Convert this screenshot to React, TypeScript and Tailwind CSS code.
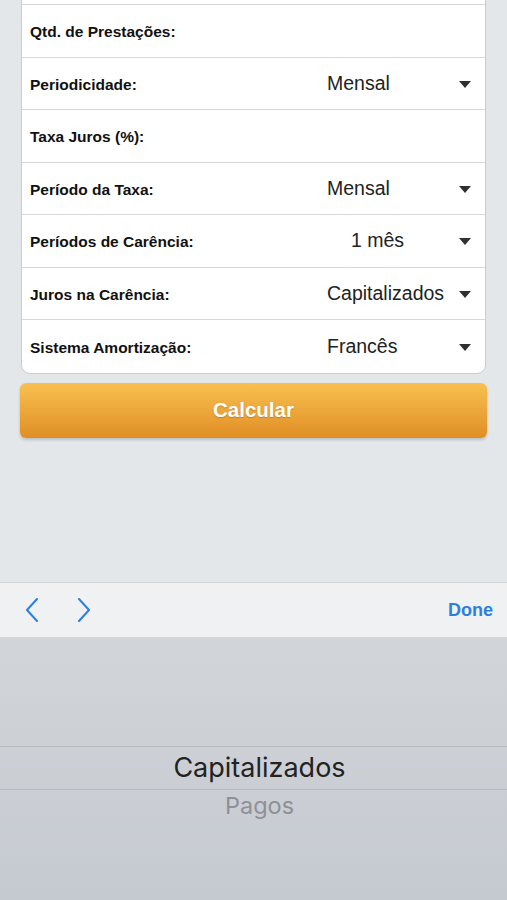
import React from "react";

type Row = { label: string; value?: string; indent?: boolean };

const rows: Row[] = [
  { label: "" },
  { label: "Qtd. de Prestações:" },
  { label: "Periodicidade:", value: "Mensal" },
  { label: "Taxa Juros (%):" },
  { label: "Período da Taxa:", value: "Mensal" },
  { label: "Períodos de Carência:", value: "1 mês", indent: true },
  { label: "Juros na Carência:", value: "Capitalizados" },
  { label: "Sistema Amortização:", value: "Francês" },
];

function Caret() {
  return (
    <svg width="12" height="7" viewBox="0 0 12 7" className="shrink-0">
      <path d="M0 0 H12 L6 7 Z" fill="#2f3033" />
    </svg>
  );
}

function Chevron({ dir }: { dir: "left" | "right" }) {
  return (
    <svg width="14" height="24" viewBox="0 0 14 24" fill="none">
      <path
        d={dir === "left" ? "M12 1 L2 12 L12 23" : "M2 1 L12 12 L2 23"}
        stroke="#2b7fe3"
        strokeWidth="2"
        strokeLinecap="round"
        strokeLinejoin="round"
      />
    </svg>
  );
}

export default function App() {
  return (
    <div className="h-[900px] flex flex-col overflow-hidden bg-[#e4e7ea] font-['Liberation_Sans',Arial,sans-serif]">
      {/* form area */}
      <div className="flex-1 flex flex-col">
        <div className="mx-[21px] -mt-[48.5px] bg-white border border-[#c9cbce] rounded-b-[9px] overflow-hidden">
          {rows.map((r, i) => (
            <div
              key={i}
              className={
                "h-[52.5px] flex items-center pl-[8px] pr-[14px] pt-[2px] " +
                (i < rows.length - 1 ? "border-b border-[#d7d8da]" : "")
              }
            >
              <span className="text-[15.5px] font-bold text-[#111] flex-1">{r.label}</span>
              {r.value && (
                <>
                  <span
                    className={
                      "w-[132px] text-[19.5px] text-[#222] -mt-[2px] " +
                      (r.indent ? "pl-[24px]" : "")
                    }
                  >
                    {r.value}
                  </span>
                  <Caret />
                </>
              )}
            </div>
          ))}
        </div>

        <button className="mx-[20px] mt-[9px] h-[55px] rounded-[6px] bg-gradient-to-b from-[#f8c050] to-[#e08e22] shadow-[0_2px_3px_rgba(0,0,0,0.18)] text-white text-[20.5px] font-bold [text-shadow:0_1px_1px_rgba(120,70,0,0.35)]">
          Calcular
        </button>
      </div>

      {/* keyboard accessory bar */}
      <div className="h-[55px] border-t border-[#d3d5d8] bg-[#f0f1f3] flex items-center pl-[25px] pr-[14px]">
        <div className="flex items-center gap-[38px]">
          <Chevron dir="left" />
          <Chevron dir="right" />
        </div>
        <span className="ml-auto text-[18px] font-bold text-[#2b7fe3]">Done</span>
      </div>

      {/* picker */}
      <div className="h-[263px] bg-gradient-to-b from-[#d2d5d9] to-[#c5cad1] flex flex-col pl-[12px] font-['Inter','Noto_Sans',sans-serif]">
        <div className="h-[109px]" />
        <div className="h-[44px] border-y border-[#b7babf] -ml-[12px] pl-[12px] flex items-center justify-center text-[27px] text-[#222]">
          Capitalizados
        </div>
        <div className="h-[32px] flex items-center justify-center text-[23.5px] text-[#8d9095]">
          Pagos
        </div>
      </div>
    </div>
  );
}
